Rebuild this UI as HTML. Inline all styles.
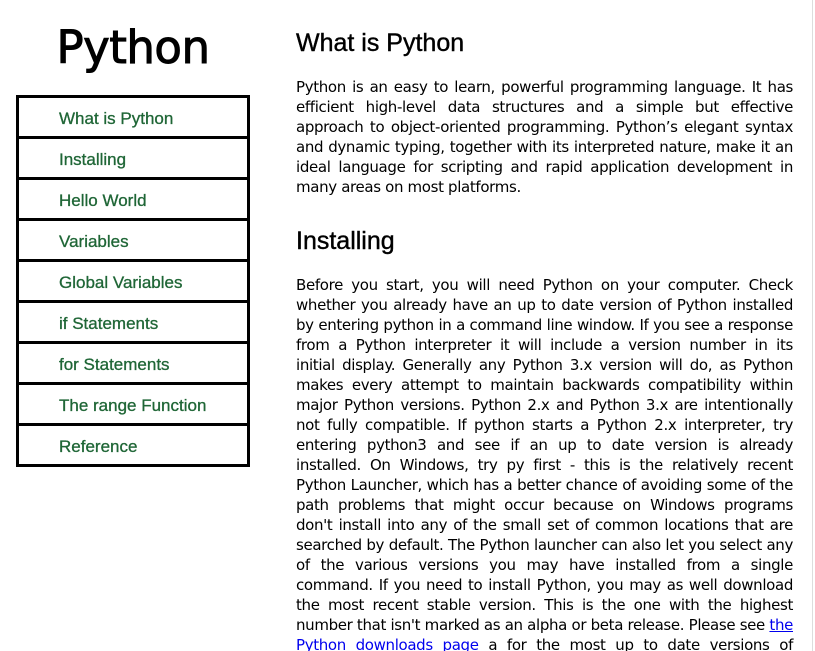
<!DOCTYPE html>
<html><head><meta charset="utf-8"><style>
html,body{margin:0;padding:0;background:#fff;width:815px;height:651px;overflow:hidden}
body{font-family:"Liberation Sans",sans-serif;color:#000;position:relative}
.edge{position:absolute;left:812px;top:0;width:1px;height:651px;background:#ddd}
h1.logo{position:absolute;left:16px;width:234px;top:20px;margin:0;text-align:center;font-family:"DejaVu Sans",sans-serif;font-size:45px;font-weight:normal;line-height:56px;letter-spacing:-0.5px;-webkit-text-stroke:1px #000}
.nav{position:absolute;left:16px;top:95px;width:228px;border:3px solid #000;border-bottom:none}
.nav div{height:38px;border-bottom:3px solid #000;color:#1f6636;font-size:17px;line-height:42px;padding-left:40px;-webkit-text-stroke:0.3px #1f6636}
.main{position:absolute;left:296px;top:0;width:497px}
h2{font-size:25px;font-weight:normal;margin:0;line-height:30px;-webkit-text-stroke:0.4px #000}
.p{font-family:"DejaVu Sans",sans-serif;font-size:15px;line-height:20px;margin:0;letter-spacing:-0.35px}
.p div{height:20px;white-space:nowrap;text-align:justify;text-align-last:justify}
.p div.l{text-align-last:left}
a{color:#00e;text-decoration:underline}
</style></head><body>
<div class="edge"></div>
<h1 class="logo">Python</h1>
<div class="nav">
<div>What is Python</div><div>Installing</div><div>Hello World</div><div>Variables</div><div>Global Variables</div><div>if Statements</div><div>for Statements</div><div>The range Function</div><div>Reference</div>
</div>
<div class="main">
<h2 style="margin-top:28px">What is Python</h2>
<div class="p" style="margin-top:19px">
<div>Python is an easy to learn, powerful programming language. It has</div>
<div>efficient high-level data structures and a simple but effective</div>
<div>approach to object-oriented programming. Python’s elegant syntax</div>
<div>and dynamic typing, together with its interpreted nature, make it an</div>
<div>ideal language for scripting and rapid application development in</div>
<div class="l">many areas on most platforms.</div>
</div>
<h2 style="margin-top:29px">Installing</h2>
<div class="p" style="margin-top:19px">
<div>Before you start, you will need Python on your computer. Check</div>
<div>whether you already have an up to date version of Python installed</div>
<div>by entering python in a command line window. If you see a response</div>
<div>from a Python interpreter it will include a version number in its</div>
<div>initial display. Generally any Python 3.x version will do, as Python</div>
<div>makes every attempt to maintain backwards compatibility within</div>
<div>major Python versions. Python 2.x and Python 3.x are intentionally</div>
<div>not fully compatible. If python starts a Python 2.x interpreter, try</div>
<div>entering python3 and see if an up to date version is already</div>
<div>installed. On Windows, try py first - this is the relatively recent</div>
<div>Python Launcher, which has a better chance of avoiding some of the</div>
<div>path problems that might occur because on Windows programs</div>
<div>don't install into any of the small set of common locations that are</div>
<div>searched by default. The Python launcher can also let you select any</div>
<div>of the various versions you may have installed from a single</div>
<div>command. If you need to install Python, you may as well download</div>
<div>the most recent stable version. This is the one with the highest</div>
<div>number that isn't marked as an alpha or beta release. Please see <a href="#">the</a></div>
<div><a href="#">Python downloads page</a> a for the most up to date versions of</div>
<div class="l">Python.</div>
</div>
</div>
</body></html>
